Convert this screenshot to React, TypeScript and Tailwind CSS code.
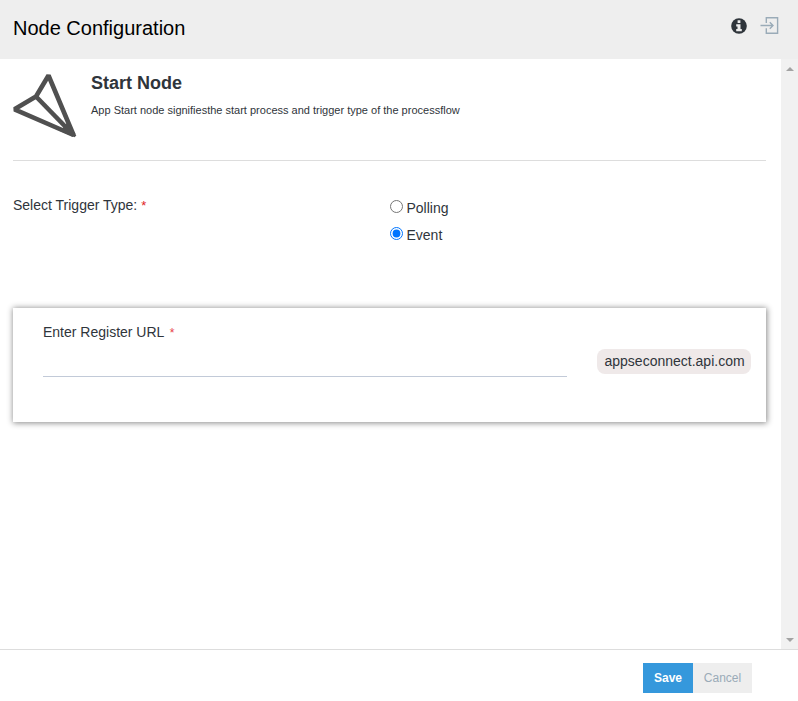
import { useState } from "react";

function PlaneIcon() {
  return (
    <svg className="block h-16 w-16 shrink-0" viewBox="0 0 64 64" fill="none" stroke="#505050" strokeWidth="4.6" strokeLinejoin="bevel">
      <path d="M35.5 1.5 L60.5 61 L1.5 35.3 L23 22.5 Z" />
      <path d="M23 22.5 L60.5 61" />
      <path d="M55 48 L63.3 61.5 L61.5 63.2 L47 57 Z" fill="#505050" stroke="none" />
    </svg>
  );
}

function InfoIcon() {
  return (
    <svg className="mt-[1px] block h-4 w-4" viewBox="0 0 16 16">
      <circle cx="8" cy="8" r="7.8" fill="#2f353b" />
      <path d="M6.6 2.2 H9.4 V5 H6.6 Z M5.2 6.3 H9.5 V11 H10.8 V13.2 H5.2 V11 H6.5 V8.4 H5.2 Z" fill="#eeeeee" />
    </svg>
  );
}

function ExitIcon() {
  return (
    <svg className="-mr-px block h-[18px] w-[19px]" viewBox="0 0 19 18" fill="none" stroke="#9aabb8" strokeWidth="1.4">
      <path d="M6.3 6 V0.8 H17.6 V16.3 H6.3 V11.3" />
      <path d="M0.5 8.5 H13 M9.8 5.3 L13 8.5 L9.8 11.7" />
    </svg>
  );
}

function Radio({ label, checked, onSelect }: { label: string; checked: boolean; onSelect: () => void }) {
  return (
    <label className="flex h-[27px] items-start">
      <input type="radio" name="trigger" checked={checked} onChange={onSelect} className="m-0 h-[13px] w-[13px]" />
      <span className="ml-[3.5px] text-sm leading-4">{label}</span>
    </label>
  );
}

export default function App() {
  const [trigger, setTrigger] = useState("Event");
  return (
    <div className="flex h-[701px] w-[798px] flex-col bg-white font-['Liberation_Sans',Arial,sans-serif] text-[#2f353b]">
      <header className="flex h-[59px] shrink-0 justify-between bg-[#eeeeee] pr-5 pl-[13px]">
        <h1 className="pt-[13px] text-xl leading-[30px] text-black">Node Configuration</h1>
        <div className="flex gap-[13px] pt-[17px]">
          <InfoIcon />
          <ExitIcon />
        </div>
      </header>
      <div className="flex h-[590px] shrink-0">
        <main className="w-[781px] pl-[13px]">
          <section className="flex h-[102px] w-[753px] border-b border-[#dddddd] pt-[15px]">
            <PlaneIcon />
            <div className="pl-3.5">
              <h2 className="h-[28px] text-lg leading-[18px] font-bold">Start Node</h2>
              <p className="text-[11px] leading-4">App Start node signifiesthe start process and trigger type of the processflow</p>
            </div>
          </section>
          <section className="flex h-[147px] pt-9">
            <div className="w-[377px] text-sm leading-4">
              Select Trigger Type: <span className="text-[13px] text-[#e02222]">*</span>
            </div>
            <div className="pt-[3px]">
              <Radio label="Polling" checked={trigger === "Polling"} onSelect={() => setTrigger("Polling")} />
              <Radio label="Event" checked={trigger === "Event"} onSelect={() => setTrigger("Event")} />
            </div>
          </section>
          <section className="flex h-[114px] w-[753px] gap-[30px] pl-[30px] shadow-[0_0_6px_0.5px_#888]">
            <div className="w-[524px] pt-4">
              <div className="text-sm leading-4">
                Enter Register URL <span className="ml-[2px] text-xs text-[#e73d4a]">*</span>
              </div>
              <input type="text" aria-label="Register URL" className="block h-9 w-full border-b border-[#c2cad8] outline-none" />
            </div>
            <div className="mt-[41px] h-[25px] w-[154px] rounded-lg bg-[#efe9e9] pl-[7.5px] text-sm leading-[25px]">appseconnect.api.com</div>
          </section>
        </main>
        <div className="flex w-[17px] flex-col items-center justify-between bg-[#f1f1f1] pt-2 pb-[7px]">
          <span className="border-x-4 border-b-4 border-x-transparent border-b-[#a3a3a3]" />
          <span className="border-x-4 border-t-4 border-x-transparent border-t-[#a3a3a3]" />
        </div>
      </div>
      <footer className="flex flex-1 justify-end border-t border-[#dddddd] pt-[13px] pr-[46px] text-xs">
        <button className="h-[30px] w-[50px] bg-[#3598dc] font-bold text-white">Save</button>
        <button className="h-[30px] w-[59px] bg-[#eeeeee] text-[#9aabb8]">Cancel</button>
      </footer>
    </div>
  );
}
